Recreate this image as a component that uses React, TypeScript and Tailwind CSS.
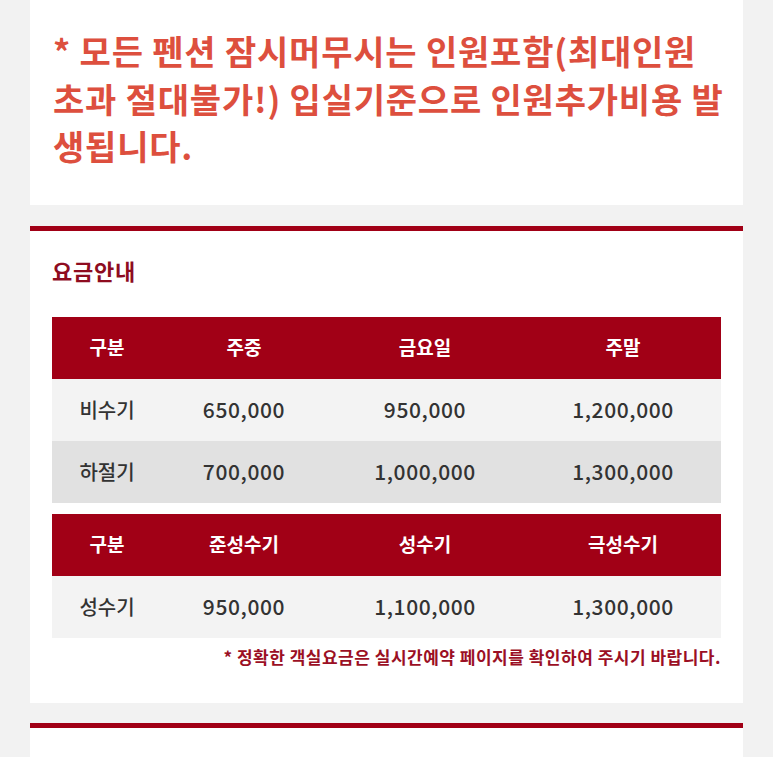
import React from "react";

const font = { fontFamily: '"Noto Sans CJK KR", "Noto Sans", sans-serif' };

type Row = string[];

const PriceTable = ({ head, rows }: { head: Row; rows: Row[] }) => (
  <div className="w-full">
    <div className="grid h-[62px] grid-cols-[110px_164px_198px_198px] items-center bg-[#a10016] text-[19px] font-bold text-white">
      {head.map((h) => (
        <div key={h} className="text-center">
          {h}
        </div>
      ))}
    </div>
    {rows.map((r, i) => (
      <div
        key={r[0]}
        className={`grid h-[62px] grid-cols-[110px_164px_198px_198px] items-center font-medium text-[#333333] ${
          i % 2 === 0 ? "bg-[#f3f3f3]" : "bg-[#e1e1e1]"
        }`}
      >
        {r.map((c, j) => (
          <div key={j} className={j === 0 ? "text-center text-[20px]" : "text-center text-[21px] tracking-[0.6px]"}>
            {c}
          </div>
        ))}
      </div>
    ))}
  </div>
);

export default function App() {
  return (
    <div className="min-h-[757px] bg-[#f2f2f2] px-[30px]" style={font}>
      <div className="bg-white pb-[35px] pl-[23px] pt-[27px]">
        <p className="whitespace-nowrap text-[34px] font-bold leading-[47.5px] tracking-[0.8px] text-[#dd4f3e]">
          * 모든 펜션 잠시머무시는 인원포함(최대인원
          <br />
          초과 절대불가!) 입실기준으로 인원추가비용 발
          <br />
          생됩니다.
        </p>
      </div>

      <div className="mt-[21px] border-t-[5px] border-[#a10016] bg-white px-[22px] pb-[33px] pt-[22px]">
        <h2 className="text-[22px] font-bold leading-[34px] tracking-[0.8px] text-[#8e0c1f]">요금안내</h2>
        <div className="mt-[30px] flex flex-col gap-[11px]">
          <PriceTable
            head={["구분", "주중", "금요일", "주말"]}
            rows={[
              ["비수기", "650,000", "950,000", "1,200,000"],
              ["하절기", "700,000", "1,000,000", "1,300,000"],
            ]}
          />
          <PriceTable head={["구분", "준성수기", "성수기", "극성수기"]} rows={[["성수기", "950,000", "1,100,000", "1,300,000"]]} />
        </div>
        <p className="mt-[6px] text-right text-[17px] font-bold leading-[26px] tracking-[0.5px] text-[#9b0f24]">
          * 정확한 객실요금은 실시간예약 페이지를 확인하여 주시기 바랍니다.
        </p>
      </div>

      <div className="mt-[20px] h-[60px] border-t-[5px] border-[#a10016] bg-white" />
    </div>
  );
}
